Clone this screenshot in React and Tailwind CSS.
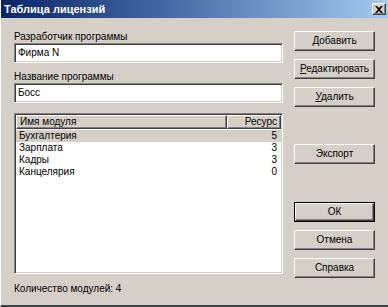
import React from 'react';

const raised =
  'border border-t-white border-l-white border-r-[#404040] border-b-[#404040] shadow-[inset_-1px_-1px_#808080]';
const sunken =
  'border border-t-[#808080] border-l-[#808080] border-r-white border-b-white shadow-[inset_1px_1px_#404040,inset_-1px_-1px_#d4d0c8]';

function Btn({ children, className = '', isDefault = false }) {
  if (isDefault) {
    return (
      <div className={`h-[20px] w-[81px] border border-black ${className}`}>
        <div className={`h-full w-full flex items-center justify-center bg-[#d4d0c8] ${raised}`}>{children}</div>
      </div>
    );
  }
  return (
    <div className={`h-[20px] w-[81px] flex items-center justify-center bg-[#d4d0c8] ${raised} ${className}`}>
      {children}
    </div>
  );
}

const modules = [
  { name: 'Бухгалтерия', res: 5 },
  { name: 'Зарплата', res: 3 },
  { name: 'Кадры', res: 3 },
  { name: 'Канцелярия', res: 0 },
];

export default function App() {
  return (
    <div
      className="w-[388px] h-[307px] bg-[#d4d0c8] text-black text-[10px] leading-[12px] flex flex-col overflow-hidden border-l border-l-white border-b-2 border-b-[#404040]"
      style={{ fontFamily: '"Liberation Sans", Arial, sans-serif' }}
    >
      {/* title bar */}
      <div className="h-[18px] shrink-0 flex items-center justify-between pl-[3px] pr-[2px] bg-gradient-to-r from-[#0a246a] to-[#a6caf0]">
        <span className="text-white font-bold text-[11px]">Таблица лицензий</span>
        <div className={`w-[14px] h-[12px] flex items-center justify-center bg-[#d4d0c8] ${raised}`}>
          <svg width="8" height="7" viewBox="0 0 8 7">
            <path d="M0 0h2l2 2 2-2h2L5 3.5 8 7H6L4 5 2 7H0l3-3.5z" fill="#000" />
          </svg>
        </div>
      </div>

      <div className="flex flex-1 pl-[13px]">
        {/* left column */}
        <div className="w-[269px] flex flex-col pt-[13px]">
          <span>Разработчик программы</span>
          <div className={`mt-[0px] h-[20px] bg-white flex items-center pl-[3px] ${sunken}`}>Фирма N</div>
          <span className="mt-[8px]">Название программы</span>
          <div className={`mt-[0px] h-[20px] bg-white flex items-center pl-[3px] ${sunken}`}>Босс</div>

          <div className={`mt-[10px] h-[161px] bg-white flex flex-col ${sunken} p-[1px]`}>
            <div className="flex h-[14px] shrink-0">
              <div className={`flex-1 bg-[#d4d0c8] flex items-center pl-[3px] ${raised}`}>Имя модуля</div>
              <div className={`w-[54px] bg-[#d4d0c8] flex items-center justify-end pr-[3px] ${raised}`}>Ресурс</div>
            </div>
            {modules.map((m, i) => (
              <div
                key={m.name}
                className={`flex h-[12px] items-center pl-[3px] pr-[4px] ${i === 0 ? 'bg-[#d4d0c8] mt-[1px]' : ''}`}
              >
                <span className="flex-1">{m.name}</span>
                <span>{m.res}</span>
              </div>
            ))}
          </div>

          <span className="mt-[9px]">Количество модулей: 4</span>
        </div>

        {/* right column */}
        <div className="ml-[11px] flex flex-col pt-[13px]">
          <Btn>
            <span><u>Д</u>обавить</span>
          </Btn>
          <Btn className="mt-[8px]">
            <span><u>Р</u>едактировать</span>
          </Btn>
          <Btn className="mt-[8px]">
            <span><u>У</u>далить</span>
          </Btn>
          <Btn className="mt-[37px]">Экспорт</Btn>
          <Btn isDefault className="mt-[38px]">ОК</Btn>
          <Btn className="mt-[8px]">Отмена</Btn>
          <Btn className="mt-[8px]">Справка</Btn>
        </div>
      </div>
    </div>
  );
}
